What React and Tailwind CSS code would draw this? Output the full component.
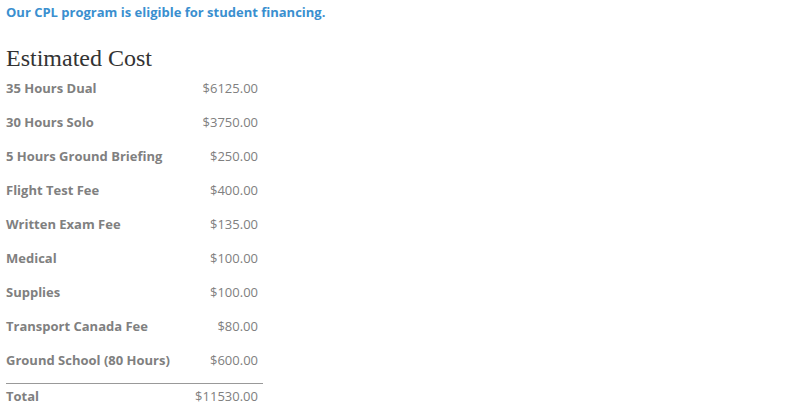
const rows = [
  ["35 Hours Dual", "$6125.00"],
  ["30 Hours Solo", "$3750.00"],
  ["5 Hours Ground Briefing", "$250.00"],
  ["Flight Test Fee", "$400.00"],
  ["Written Exam Fee", "$135.00"],
  ["Medical", "$100.00"],
  ["Supplies", "$100.00"],
  ["Transport Canada Fee", "$80.00"],
  ["Ground School (80 Hours)", "$600.00"],
];

export default function App() {
  return (
    <div className="w-[800px] h-[413px] bg-white overflow-hidden font-['Open_Sans',sans-serif] px-[6px]">
      <p className="text-[13px] font-bold text-[#3a8fcf] leading-[18px] pt-[3px]">
        Our CPL program is eligible for student financing.
      </p>

      <h2 className="mt-[23px] font-['Liberation_Serif',serif] text-[24px] leading-[28px] text-[#333]">
        Estimated Cost
      </h2>

      <table className="w-[257px] text-[13px] text-[#808080]">
        <tbody>
          {rows.map(([label, price], i) => (
            <tr key={label} className={i === rows.length - 1 ? "h-[39px]" : "h-[34px]"}>
              <td className={i === rows.length - 1 ? "font-bold pb-[5px]" : "font-bold"}>{label}</td>
              <td className={i === rows.length - 1 ? "text-right pr-[5px] pb-[5px]" : "text-right pr-[5px]"}>{price}</td>
            </tr>
          ))}
          <tr className="h-[26px] border-t border-[#999]">
            <td className="font-bold">Total</td>
            <td className="text-right pr-[5px]">$11530.00</td>
          </tr>
        </tbody>
      </table>
    </div>
  );
}
